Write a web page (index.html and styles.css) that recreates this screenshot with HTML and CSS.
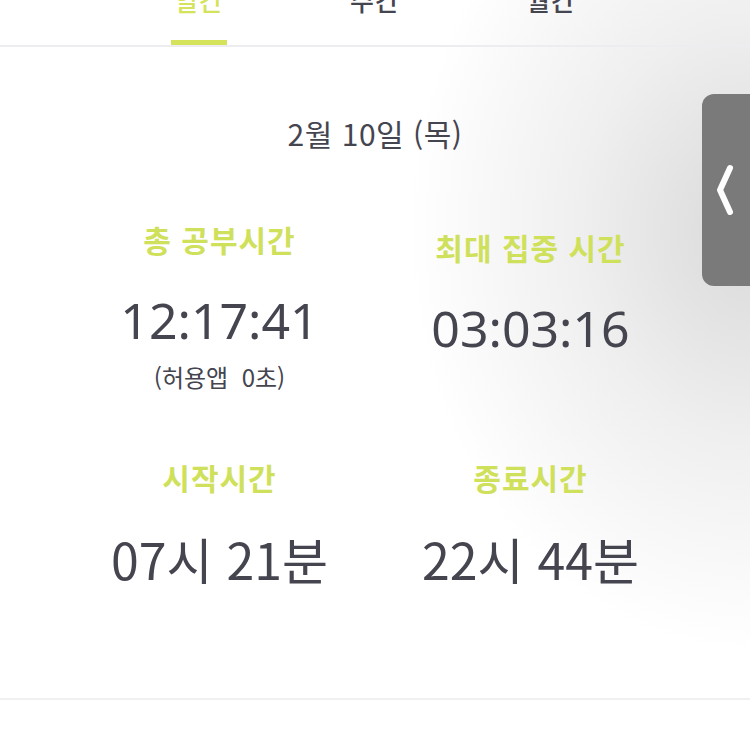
FILE: index.html
```html
<!DOCTYPE html>
<html lang="ko">
<head>
    <meta charset="UTF-8">
    <link rel="stylesheet" href="styles.css">
</head>
<body>
    <div class="tabs">
        <div class="tab active"><span class="tab-label">일간</span><span class="tab-bar"></span></div>
        <div class="tab"><span class="tab-label">주간</span><span class="tab-bar"></span></div>
        <div class="tab"><span class="tab-label">월간</span><span class="tab-bar"></span></div>
    </div>

    <div class="content">
        <div class="date">2월 10일 (목)</div>

        <div class="stats">
            <div class="stat">
                <div class="label">총 공부시간</div>
                <div class="value">12:17:41</div>
                <div class="sub">(허용앱 &nbsp;0초)</div>
            </div>
            <div class="stat lower">
                <div class="label">최대 집중 시간</div>
                <div class="value">03:03:16</div>
            </div>
            <div class="stat">
                <div class="label">시작시간</div>
                <div class="value big">07시 21분</div>
            </div>
            <div class="stat">
                <div class="label">종료시간</div>
                <div class="value big">22시 44분</div>
            </div>
        </div>
    </div>

    <div class="bottom-line"></div>

    <!-- 오른쪽 서랍 손잡이 -->
    <div class="drawer">
        <svg width="20" height="56" viewBox="0 0 20 56">
            <path d="M14 6 L4 28 L14 50" fill="none" stroke="#fff" stroke-width="6" stroke-linecap="round" stroke-linejoin="round"/>
        </svg>
    </div>
</body>
</html>
```

FILE: styles.css
```css
*{
    box-sizing: border-box;
}
html, body{
    height: 100%;
}
body{
    margin: 0;
    overflow: hidden;
    font-family: "Noto Sans CJK KR", "Noto Sans", sans-serif;
    color: #44454f;
    background: radial-gradient(ellipse 340px 420px at 100% 230px, #d9d9d9 0%, #efefef 50%, #fff 100%);
}
.tabs{
    display: flex;
    justify-content: center;
    margin-top: -18px;
    border-bottom: 2px solid #ececf1;
}
.tab{
    width: 176px;
    display: flex;
    flex-direction: column;
    align-items: center;
}
.tab-label{
    font-size: 26px;
    line-height: 36px;
    font-weight: 500;
    letter-spacing: 1px;
}
.tab-bar{
    width: 56px;
    height: 5px;
    margin-top: 22px;
}
.tab.active .tab-label{
    color: #d4e35a;
}
.tab.active .tab-bar{
    background: #d4e35a;
}
.content{
    padding-top: 66px;
}
.date{
    text-align: center;
    font-size: 30px;
    line-height: 40px;
    letter-spacing: 0.5px;
}
.stats{
    display: grid;
    grid-template-columns: 311px 311px;
    justify-content: center;
    align-items: start;
    row-gap: 68px;
    margin-top: 66px;
}
.stat{
    display: flex;
    flex-direction: column;
    align-items: center;
}
.stat.lower{
    padding-top: 8px;
}
.label{
    font-size: 30px;
    line-height: 40px;
    font-weight: 700;
    letter-spacing: 1px;
    color: #cfe05a;
}
.value{
    font-family: "Noto Sans", "Noto Sans CJK KR", sans-serif;
    font-size: 50px;
    line-height: 64px;
    margin-top: 29px;
}
.value.big{
    font-family: "Noto Sans CJK KR", "Noto Sans", sans-serif;
    font-size: 50px;
    line-height: 60px;
    margin-top: 31px;
}
.sub{
    font-size: 24px;
    line-height: 24px;
    margin-top: 13px;
}
.bottom-line{
    margin-top: 110px;
    border-top: 2px solid #f0f0f0;
}
.drawer{
    position: absolute;
    right: 0;
    top: 94px;
    width: 48px;
    height: 192px;
    border-radius: 12px 0 0 12px;
    background: #7a7a7a;
    display: flex;
    align-items: center;
    padding-left: 14px;
}
```
